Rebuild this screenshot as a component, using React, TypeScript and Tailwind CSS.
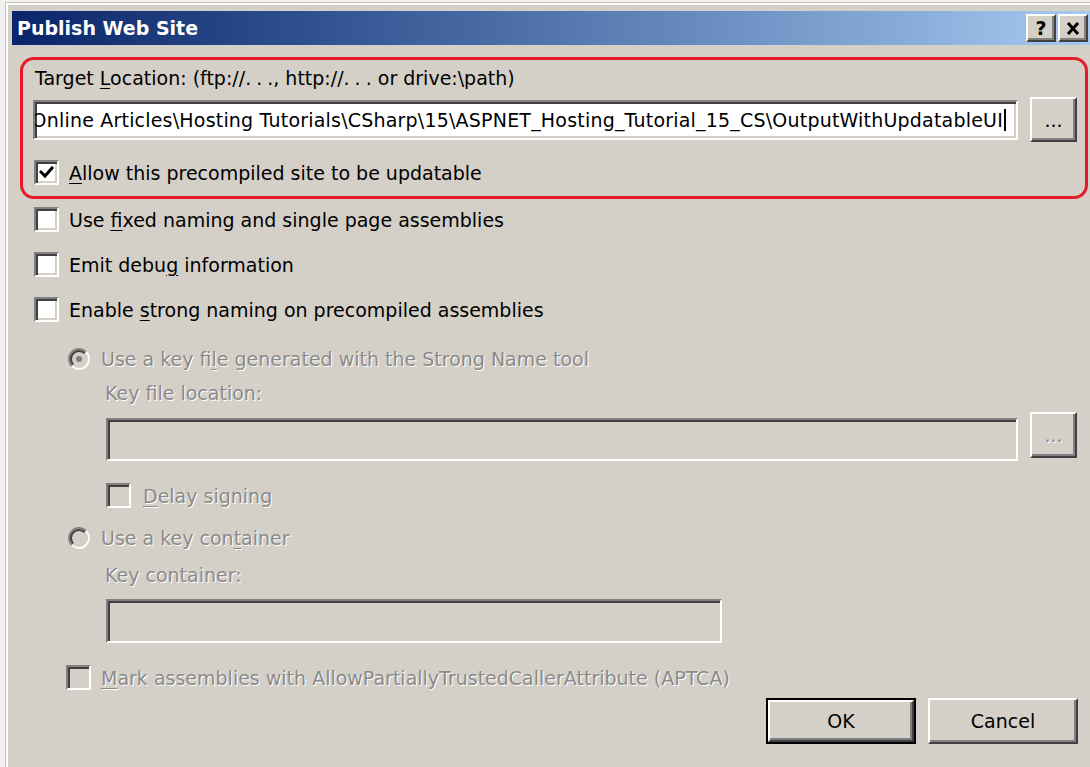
import React from 'react';

// Classic Windows dialog chrome: sunken fields, raised buttons, 3D radios
const sunken =
  'border-2 border-t-[#808080] border-l-[#808080] border-b-white border-r-white shadow-[inset_2px_2px_0_#404040,inset_-2px_-2px_0_#d4d0c8]';
const raised =
  'border-2 border-t-white border-l-white border-b-[#404040] border-r-[#404040] shadow-[inset_-2px_-2px_0_#808080]';
const dim = 'text-[#8a8a8a] [text-shadow:1px_1px_0_#ffffff]';

const U: React.FC<{ children: React.ReactNode }> = ({ children }) => (
  <span className="underline decoration-1 underline-offset-[3px]">{children}</span>
);

// wide-spaced ellipsis, no trailing gap after the last dot
const Dots: React.FC = () => (
  <span>
    <span className="tracking-[5px]">..</span>.
  </span>
);

const CheckBox: React.FC<{ checked?: boolean; disabled?: boolean }> = ({ checked, disabled }) => (
  <div className={`${sunken} w-[25px] h-[25px] shrink-0 flex items-center justify-center ${disabled ? 'bg-[#d4d0c8]' : 'bg-white'}`}>
    {checked && (
      <svg width="15" height="13" viewBox="0 0 15 13">
        <polyline points="2,6 6,10 13,2" fill="none" stroke="#000" strokeWidth="3" strokeLinecap="square" />
      </svg>
    )}
  </div>
);

const Radio: React.FC<{ checked?: boolean }> = ({ checked }) => (
  <svg width="22" height="22" viewBox="0 0 22 22" className="shrink-0">
    <circle cx="11" cy="11" r="8" fill="#d4d0c8" />
    <path d="M3.93 18.07 A10 10 0 0 1 18.07 3.93" fill="none" stroke="#808080" strokeWidth="2" />
    <path d="M18.07 3.93 A10 10 0 0 1 3.93 18.07" fill="none" stroke="#ffffff" strokeWidth="2" />
    <path d="M5.34 16.66 A8 8 0 0 1 16.66 5.34" fill="none" stroke="#404040" strokeWidth="2" />
    <path d="M16.66 5.34 A8 8 0 0 1 5.34 16.66" fill="none" stroke="#d4d0c8" strokeWidth="2" />
    {checked && <circle cx="11" cy="11" r="3" fill="#808080" />}
  </svg>
);

const CheckRow: React.FC<{ children: React.ReactNode; checked?: boolean }> = ({ children, checked }) => (
  <div className="flex items-center h-[25px] gap-[10px]">
    <CheckBox checked={checked} />
    <span>{children}</span>
  </div>
);

export default function App() {
  return (
    <div className="w-[1090px] h-[767px] overflow-hidden bg-[#f2f1ef] pl-[6px] pt-[3px] font-['DejaVu_Sans',sans-serif] text-[19px] leading-[22px] text-black">
      <div className="w-[1100px] h-[800px] bg-[#d4d0c8] border-l-2 border-t-2 border-white shadow-[-1px_-1px_0_#c6c3bd] pl-[4px] pt-[6px]">
        {/* caption bar */}
        <div className="flex items-center justify-between w-[1078px] h-[34px] pl-[5px] pr-[2px] bg-linear-to-r from-[#0a246a] to-[#a6caf0]">
          <span className="text-white font-bold text-[19px]">Publish Web Site</span>
          <div className="flex gap-[2px]">
            <div className={`${raised} w-[30px] h-[28px] bg-[#d4d0c8] flex items-center justify-center font-bold text-[19px]`}>?</div>
            <div className={`${raised} w-[30px] h-[28px] bg-[#d4d0c8] flex items-center justify-center`}>
              <svg width="14" height="13" viewBox="0 0 14 13">
                <path d="M2 1 L12 12 M12 1 L2 12" stroke="#000" strokeWidth="3" />
              </svg>
            </div>
          </div>
        </div>

        <div className="w-[1078px]">
          {/* highlighted target section */}
          <div className="ml-[8px] mt-[12px] w-[1068px] border-[3px] border-[#e81a2a] rounded-[14px] pt-[7px] pb-[11px] pl-[10px]">
            <div className="pl-[2px] h-[22px] whitespace-nowrap">
              Target <U>L</U>ocation: (ftp://<Dots />, http://<Dots /> or drive:\path)
            </div>
            <div className="flex items-center gap-[12px] mt-[8px] h-[45px]">
              <div className={`${sunken} w-[985px] h-[40px] bg-white flex items-center justify-end overflow-hidden pr-[10px] whitespace-nowrap tracking-[0.2px]`}>
                <span>Online Articles\Hosting Tutorials\CSharp\15\ASPNET_Hosting_Tutorial_15_CS\OutputWithUpdatableUI</span>
                <span className="inline-block w-[2px] h-[22px] bg-black ml-[1px] shrink-0" />
              </div>
              <div className={`${raised} w-[47px] h-[45px] bg-[#d4d0c8] flex items-center justify-center`}>...</div>
            </div>
            <div className="mt-[18px] ml-[1px]">
              <CheckRow checked>
                <U>A</U>llow this precompiled site to be updatable
              </CheckRow>
            </div>
          </div>

          <div className="pl-[22px]">
            <div className="mt-[8px]">
              <CheckRow>
                Use <U>f</U>ixed naming and single page assemblies
              </CheckRow>
            </div>
            <div className="mt-[20px]">
              <CheckRow>
                Emit debu<U>g</U> information
              </CheckRow>
            </div>
            <div className="mt-[20px]">
              <CheckRow>
                Enable <U>s</U>trong naming on precompiled assemblies
              </CheckRow>
            </div>
          </div>

          {/* strong name options, disabled */}
          <div className={dim}>
            <div className="mt-[25px] ml-[56px] flex items-center h-[24px] gap-[11px]">
              <Radio checked />
              <span>
                Use a key fi<U>l</U>e generated with the Strong Name tool
              </span>
            </div>
            <div className="mt-[11px] ml-[93px] h-[22px]">Key file location:</div>
            <div className="mt-[8px] ml-[94px] flex items-start gap-[12px]">
              <div className={`${sunken} mt-[6px] w-[912px] h-[43px] bg-[#d4d0c8]`} />
              <div className={`${raised} w-[47px] h-[46px] bg-[#d4d0c8] flex items-center justify-center`}>...</div>
            </div>
            <div className="mt-[22px] ml-[94px] flex items-center h-[25px] gap-[12px]">
              <CheckBox disabled />
              <span>
                <U>D</U>elay signing
              </span>
            </div>
            <div className="mt-[18px] ml-[56px] flex items-center h-[24px] gap-[11px]">
              <Radio />
              <span>
                Use a key con<U>t</U>ainer
              </span>
            </div>
            <div className="mt-[14px] ml-[93px] h-[22px]">Key container:</div>
            <div className={`${sunken} mt-[13px] ml-[94px] w-[616px] h-[44px] bg-[#d4d0c8]`} />
            <div className="mt-[22px] ml-[54px] flex items-center h-[25px] gap-[10px]">
              <CheckBox disabled />
              <span>
                <U>M</U>ark assemblies with AllowPartiallyTrustedCallerAttribute (APTCA)
              </span>
            </div>
          </div>

          <div className="mt-[8px] pr-[12px] flex justify-end gap-[12px]">
            <div className="w-[150px] h-[46px] border-2 border-black">
              <div className={`${raised} w-full h-full bg-[#d4d0c8] flex items-center justify-center`}>OK</div>
            </div>
            <div className={`${raised} w-[150px] h-[46px] bg-[#d4d0c8] flex items-center justify-center`}>Cancel</div>
          </div>
        </div>
      </div>
    </div>
  );
}
